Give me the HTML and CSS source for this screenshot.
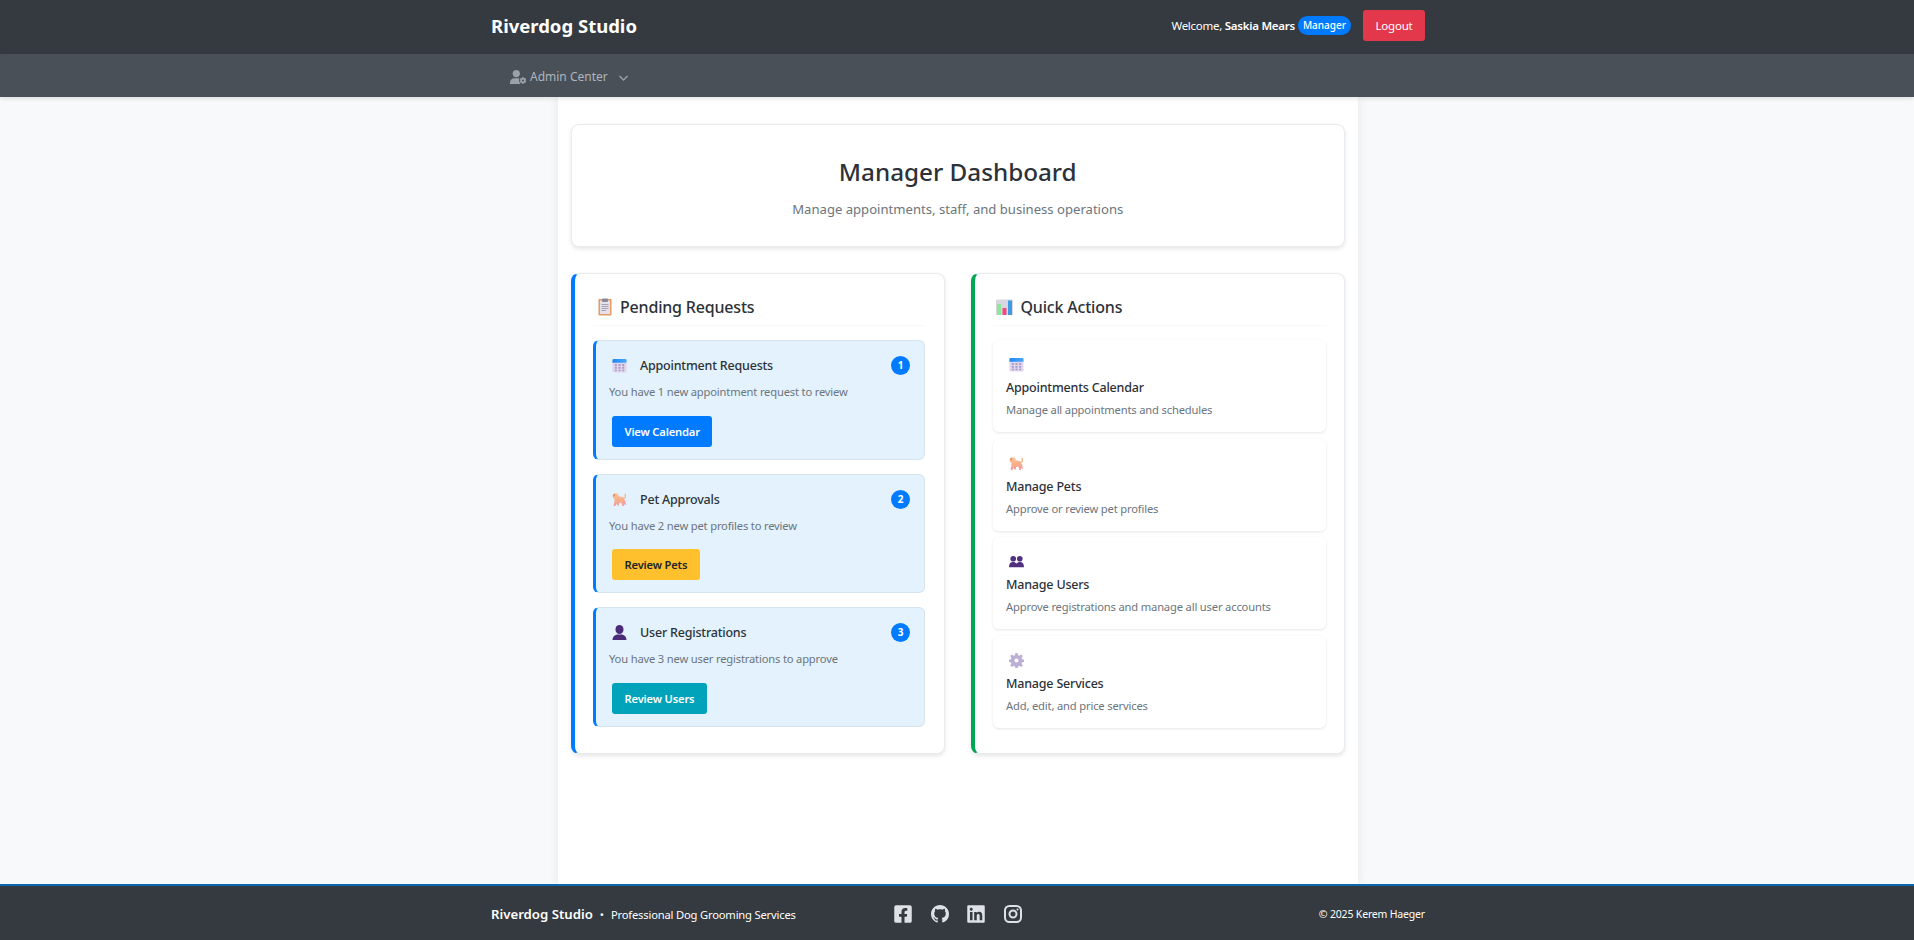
FILE: index.html
```html
<!DOCTYPE html>
<html lang="en">
<head>
    <meta charset="UTF-8">
    <meta name="viewport" content="width=device-width, initial-scale=1.0">
    <title>Riverdog Studio</title>
    <link rel="stylesheet" href="styles.css">
</head>
<body>

    <!-- Shared icon drawings -->
    <svg class="icon-defs" width="0" height="0" aria-hidden="true">
        <defs>
            <linearGradient id="calTop" x1="0" y1="0" x2="1" y2="0">
                <stop offset="0" stop-color="#1e88f5"/>
                <stop offset="1" stop-color="#4aa8f8"/>
            </linearGradient>
            <linearGradient id="dogFur" x1="0" y1="0" x2="0" y2="1">
                <stop offset="0" stop-color="#f9c598"/>
                <stop offset="1" stop-color="#f6a585"/>
            </linearGradient>
            <symbol id="ico-calendar" viewBox="0 0 16 16">
                <rect x="0.5" y="1" width="15" height="14.5" rx="1.5" fill="#e2d6ee"/>
                <path d="M0.5 5V2.500A1.500 1.500 0 0 1 2 1h12a1.500 1.500 0 0 1 1.500 1.500V5z" fill="url(#calTop)"/>
                <g fill="#a99cc4">
                    <rect x="3" y="6.500" width="2.200" height="2"/><rect x="6.900" y="6.500" width="2.200" height="2"/><rect x="10.800" y="6.500" width="2.200" height="2"/>
                    <rect x="3" y="9.500" width="2.200" height="2"/><rect x="6.900" y="9.500" width="2.200" height="2"/><rect x="10.800" y="9.500" width="2.200" height="2"/>
                    <rect x="3" y="12.500" width="2.200" height="1.600"/><rect x="6.900" y="12.500" width="2.200" height="1.600"/><rect x="10.800" y="12.500" width="2.200" height="1.600"/>
                </g>
            </symbol>
            <symbol id="ico-clipboard" viewBox="0 0 14 18">
                <rect x="0.500" y="1" width="13" height="16.500" rx="0.800" fill="#e79a63"/>
                <rect x="2" y="2.500" width="10" height="13.500" fill="#e4e1ea"/>
                <rect x="4" y="0.500" width="6" height="3.500" rx="1" fill="#8d8599"/>
                <path d="M3.500 6.500h7M3.500 8.500h7M3.500 10.500h7M3.500 12.500h4.500" stroke="#a8a3b4" stroke-width="1"/>
            </symbol>
            <symbol id="ico-chart" viewBox="0 0 17 16">
                <rect x="0" y="0.500" width="17" height="15.500" rx="0.800" fill="#d8d6de"/>
                <rect x="1" y="5" width="4" height="11" fill="#8fe59a"/>
                <rect x="6.500" y="9" width="4" height="7" fill="#ef4a82"/>
                <rect x="12" y="1.500" width="4" height="14.500" fill="#3f9be0"/>
            </symbol>
            <symbol id="ico-dog" viewBox="0 0 16 16">
                <path d="M11.800 7.500c2.400-.3 3.500-3.300 1.700-5.500" fill="none" stroke="#f6b48c" stroke-width="1.400"/>
                <path d="M2.600 10.500l-1 4.500h1.800l1.900-3zM5 11l.6 3.500h1.600l.4-3zM10 11l1 4h1.800l-.4-4.500zM11.500 9.500l2 4h1.400l-1-5z" fill="#f59d97"/>
                <path d="M1.700 2.200C3 .9 5.500.9 6.500 2.300c.4.7.6 1.500.6 2.200 1.800.6 3.300.6 4.600.7 1 .3 1.300 1.500 1.200 2.800-.1 1.700-1 3-2.500 3.300-2.400.5-4.900.5-7-.1-.9-.4-1.100-2-.6-3.700C1.600 7 1 6 .7 4.800c-.2-1 .3-2 1-2.600z" fill="url(#dogFur)"/>
                <path d="M1.200 2.800c.6-.9 1.700-1.200 2.300-.8-.1 1.200-.5 2.300-1.200 3-.7-.5-1.300-1.300-1.100-2.200z" fill="#e08f63"/>
            </symbol>
            <symbol id="ico-user" viewBox="0 0 16 16">
                <ellipse cx="8" cy="4.800" rx="4.300" ry="4.800" fill="#4b2a78"/>
                <path d="M0.500 16c.1-3.400 2-5.200 4.800-5.900h5.400c2.800.7 4.700 2.500 4.800 5.900z" fill="#4b2a78"/>
            </symbol>
            <symbol id="ico-users" viewBox="0 0 16 12">
                <circle cx="4.500" cy="3" r="3" fill="#51307f"/>
                <circle cx="11.500" cy="3" r="3" fill="#51307f"/>
                <path d="M0 12c0-3.500 1.500-5.500 4.500-5.500 1.500 0 2.700.6 3.500 1.700.8-1.100 2-1.700 3.500-1.700 3 0 4.500 2 4.500 5.500z" fill="#51307f"/>
            </symbol>
            <symbol id="ico-gear" viewBox="0 0 16 16">
                <path d="M6.800 0h2.400l.4 2.300 1.500.6 1.900-1.300 1.700 1.700-1.300 1.900.6 1.500 2 .4v2.400l-2 .4-.6 1.500 1.300 1.900-1.700 1.700-1.900-1.300-1.500.6-.4 2h-2.400l-.4-2-1.500-.6-1.900 1.300-1.700-1.700 1.300-1.900-.6-1.500-2-.4v-2.400l2-.4.6-1.500-1.300-1.900 1.700-1.700 1.900 1.300 1.500-.6z" fill="#bcaed4"/>
                <circle cx="8" cy="8" r="2.200" fill="#fff"/>
            </symbol>
        </defs>
    </svg>

    <header class="topbar">
        <div class="wrap topbar-inner">
            <a class="brand">Riverdog Studio</a>
            <div class="user-area">
                <span class="welcome">Welcome, <strong>Saskia Mears</strong></span>
                <span class="role-pill">Manager</span>
                <button class="logout" type="button">Logout</button>
            </div>
        </div>
    </header>

    <nav class="subnav">
        <div class="wrap subnav-inner">
            <svg class="nav-icon" viewBox="0 0 16 14" width="16" height="14">
                <circle cx="6.300" cy="3.600" r="3.600" fill="#9aa1a8"/>
                <path d="M0 14v-1.600C0 10 2 8.200 4.300 8.200h3.900c.4 0 .7 0 1 .1-.3 1.900.1 4 1.200 5.700z" fill="#9aa1a8"/>
                <circle cx="13" cy="10.500" r="1.900" fill="none" stroke="#9aa1a8" stroke-width="1.800"/>
                <path d="M13 7v1.200M13 12.800V14M10 8.800l1 .6M15 11.600l1 .6M10 12.200l1-.6M15 9.400l1-.6" stroke="#9aa1a8" stroke-width="1.300"/>
            </svg>
            <span class="nav-label">Admin Center</span>
            <svg class="nav-chevron" viewBox="0 0 9 6" width="9" height="6">
                <path d="M.5 1L4.500 5 8.500 1" fill="none" stroke="#9aa1a8" stroke-width="1.400"/>
            </svg>
        </div>
    </nav>

    <main class="page">
        <section class="hero">
            <h1>Manager Dashboard</h1>
            <p>Manage appointments, staff, and business operations</p>
        </section>

        <div class="columns">
            <section class="panel panel-blue">
                <h2 class="panel-title">
                    <svg class="title-icon clip"><use href="#ico-clipboard"/></svg>
                    Pending Requests
                </h2>

                <article class="request">
                    <div class="request-head">
                        <svg class="emoji"><use href="#ico-calendar"/></svg>
                        <h3>Appointment Requests</h3>
                        <span class="count">1</span>
                    </div>
                    <p>You have 1 new appointment request to review</p>
                    <a class="btn btn-blue">View Calendar</a>
                </article>

                <article class="request">
                    <div class="request-head">
                        <svg class="emoji"><use href="#ico-dog"/></svg>
                        <h3>Pet Approvals</h3>
                        <span class="count">2</span>
                    </div>
                    <p>You have 2 new pet profiles to review</p>
                    <a class="btn btn-yellow">Review Pets</a>
                </article>

                <article class="request">
                    <div class="request-head">
                        <svg class="emoji"><use href="#ico-user"/></svg>
                        <h3>User Registrations</h3>
                        <span class="count">3</span>
                    </div>
                    <p>You have 3 new user registrations to approve</p>
                    <a class="btn btn-teal">Review Users</a>
                </article>
            </section>

            <section class="panel panel-green">
                <h2 class="panel-title">
                    <svg class="title-icon chart"><use href="#ico-chart"/></svg>
                    Quick Actions
                </h2>

                <a class="action">
                    <svg class="emoji"><use href="#ico-calendar"/></svg>
                    <h3>Appointments Calendar</h3>
                    <p>Manage all appointments and schedules</p>
                </a>
                <a class="action">
                    <svg class="emoji"><use href="#ico-dog"/></svg>
                    <h3>Manage Pets</h3>
                    <p>Approve or review pet profiles</p>
                </a>
                <a class="action">
                    <svg class="emoji"><use href="#ico-users"/></svg>
                    <h3>Manage Users</h3>
                    <p>Approve registrations and manage all user accounts</p>
                </a>
                <a class="action">
                    <svg class="emoji"><use href="#ico-gear"/></svg>
                    <h3>Manage Services</h3>
                    <p>Add, edit, and price services</p>
                </a>
            </section>
        </div>
    </main>

    <footer class="footer">
        <div class="wrap footer-inner">
            <div class="footer-brand">
                <strong>Riverdog Studio</strong>
                <span class="dot">&bull;</span>
                <span class="tagline">Professional Dog Grooming Services</span>
            </div>
            <div class="socials">
                <svg viewBox="0 0 448 512"><path d="M400 32H48A48 48 0 0 0 0 80v352a48 48 0 0 0 48 48h137.250V327.690h-63V256h63v-54.640c0-62.150 37-96.480 93.670-96.480 27.140 0 55.520 4.840 55.520 4.840v61h-31.270c-30.810 0-40.420 19.120-40.420 38.730V256h68.780l-11 71.690h-57.780V480H400a48 48 0 0 0 48-48V80a48 48 0 0 0-48-48z"/></svg>
                <svg viewBox="0 0 16 16"><path d="M8 0C3.580 0 0 3.580 0 8c0 3.540 2.290 6.530 5.470 7.590.4.070.55-.17.55-.38 0-.19-.01-.82-.01-1.490-2.010.37-2.530-.49-2.690-.94-.09-.23-.48-.94-.82-1.130-.28-.15-.68-.52-.01-.53.63-.01 1.080.58 1.230.82.720 1.210 1.870.87 2.330.66.070-.52.280-.87.510-1.070-1.780-.2-3.640-.89-3.640-3.950 0-.87.310-1.590.820-2.150-.08-.2-.36-1.020.080-2.120 0 0 .670-.21 2.200.82.640-.18 1.320-.27 2-.27.680 0 1.360.09 2 .27 1.530-1.040 2.200-.82 2.200-.82.440 1.100.160 1.920.080 2.120.510.560.820 1.270.820 2.150 0 3.070-1.870 3.750-3.650 3.950.290.250.540.730.540 1.480 0 1.070-.01 1.930-.01 2.200 0 .21.150.46.550.38A8.012 8.012 0 0 0 16 8c0-4.420-3.580-8-8-8z"/></svg>
                <svg viewBox="0 0 448 512"><path d="M416 32H31.900C14.300 32 0 46.500 0 64.300v383.400C0 465.500 14.300 480 31.900 480H416c17.600 0 32-14.500 32-32.300V64.300c0-17.800-14.400-32.300-32-32.300zM135.400 416H69V202.200h66.500V416zm-33.200-243c-21.300 0-38.500-17.300-38.500-38.500S80.900 96 102.200 96c21.200 0 38.500 17.300 38.500 38.500 0 21.300-17.200 38.500-38.500 38.500zm282.100 243h-66.400V312c0-24.800-.5-56.700-34.500-56.700-34.600 0-39.900 27-39.900 54.900V416h-66.400V202.200h63.700v29.200h.9c8.900-16.800 30.600-34.500 62.900-34.500 67.200 0 79.700 44.300 79.700 101.900V416z"/></svg>
                <svg viewBox="0 0 18 20" class="insta">
                    <rect x="1" y="2" width="16" height="16" rx="4.500"/>
                    <circle cx="9" cy="10" r="3.500"/>
                    <circle class="insta-dot" cx="13.500" cy="5.500" r="1"/>
                </svg>
            </div>
            <div class="copyright">&copy; 2025 Kerem Haeger</div>
        </div>
    </footer>

</body>
</html>
```

FILE: styles.css
```css
* {
    box-sizing: border-box;
}

body {
    display: flex;
    flex-direction: column;
    height: 100vh;
    margin: 0;
    font-family: "Noto Sans", "Open Sans", sans-serif;
    background-color: #f8f9fa;
    color: #212529;
    overflow: hidden;
}

.icon-defs {
    position: absolute;
}

.wrap {
    width: 964px;
    margin: 0 474px 0 476px;
    padding: 0 15px;
}

/* Top bar */
.topbar {
    height: 54px;
    flex-shrink: 0;
    background-color: #343a40;
}

.topbar-inner {
    display: flex;
    align-items: center;
    justify-content: space-between;
    height: 100%;
    padding-bottom: 3px;
}

.brand {
    color: #fff;
    font-size: 18.500px;
    font-weight: 700;
}

.user-area {
    display: flex;
    align-items: center;
    color: #fff;
    font-size: 11.500px;
}

.welcome {
    letter-spacing: -0.260px;
}

.welcome strong {
    font-weight: 600;
}

.role-pill {
    margin-left: 3px;
    padding: 3px 5px;
    height: 19px;
    border-radius: 10px;
    background-color: #007bff;
    font-size: 10px;
    line-height: 13px;
    font-weight: 500;
}

.logout {
    width: 62px;
    height: 31px;
    margin-left: 12px;
    padding: 0;
    border: none;
    border-radius: 3px;
    background-color: #e3384c;
    color: #fff;
    font-family: inherit;
    font-size: 11.500px;
    letter-spacing: -0.200px;
}

/* Sub navigation */
.subnav {
    height: 43px;
    flex-shrink: 0;
    background-color: #495057;
    position: relative;
    box-shadow: 0 2px 4px rgba(0, 0, 0, 0.1);
    z-index: 2;
}

.subnav-inner {
    display: flex;
    align-items: center;
    height: 100%;
    padding-top: 2px;
    color: #adb5bd;
    font-size: 12px;
}

.nav-icon {
    margin-left: 19px;
}

.nav-label {
    margin-left: 4px;
}

.nav-chevron {
    margin-left: 11px;
    margin-top: 2px;
}

/* Main column */
.page {
    flex: 1;
    width: 800px;
    margin: 0 556px 0 558px;
    padding: 27px 13.500px 0 13px;
    background-color: #fff;
    box-shadow: 0 0 10px rgba(0, 0, 0, 0.08);
}

.hero {
    height: 123px;
    padding-top: 30px;
    border: 1px solid #e9ecef;
    border-radius: 8px;
    background-color: #fff;
    box-shadow: 0 2px 4px rgba(0, 0, 0, 0.1);
    text-align: center;
}

.hero h1 {
    margin: 0;
    color: #2c3238;
    font-size: 24.250px;
    line-height: 34px;
    font-weight: 500;
}

.hero p {
    margin: 11px 0 0;
    color: #6c757d;
    font-size: 13.100px;
}

.columns {
    display: grid;
    grid-template-columns: 374px 373.500px;
    justify-content: space-between;
    align-items: start;
    margin-top: 26px;
}

.panel {
    height: 481px;
    padding: 0 19px 0 18px;
    border: 1px solid #e9ecef;
    border-left-width: 4px;
    border-radius: 8px;
    background-color: #fff;
    box-shadow: 0 2px 4px rgba(0, 0, 0, 0.1);
}

.panel-blue {
    border-left-color: #007bff;
}

.panel-green {
    border-left-color: #00a651;
    padding-right: 18px;
}

.panel-title {
    display: flex;
    align-items: center;
    height: 52px;
    margin: 0 0 14px;
    padding: 15px 0 0 5px;
    border-bottom: 1px solid #f8f9fa;
    color: #2c3238;
    font-size: 16px;
    font-weight: 500;
    letter-spacing: -0.190px;
}

.title-icon {
    flex-shrink: 0;
    margin-right: 8px;
}

.title-icon.clip {
    width: 14px;
    height: 18px;
}

.title-icon.chart {
    width: 17px;
    height: 16px;
    margin-left: -2px;
    margin-right: 7.500px;
}

/* Pending request cards */
.request {
    height: 119.500px;
    margin-bottom: 14px;
    padding: 15px 14px 0 13px;
    border: 1px solid #d6e4f0;
    border-left: 3px solid #007bff;
    border-radius: 6px;
    background-color: #e3f2fd;
}

.request-head {
    display: flex;
    align-items: center;
    height: 19px;
    padding-left: 3px;
}

.request-head .emoji {
    width: 15px;
    height: 15px;
    margin-right: 13px;
}

.request-head h3 {
    flex: 1;
    margin: 0;
    color: #2c3238;
    font-size: 12.500px;
    font-weight: 500;
    letter-spacing: -0.200px;
}

.count {
    width: 19px;
    height: 19px;
    border-radius: 50%;
    background-color: #007bff;
    color: #fff;
    font-size: 10px;
    font-weight: 700;
    line-height: 19px;
    text-align: center;
}

.request p {
    margin: 9px 0 0;
    color: #6c757d;
    font-size: 11.200px;
    letter-spacing: -0.180px;
}

.btn {
    display: inline-block;
    height: 31px;
    margin: 16.500px 0 0 3px;
    padding: 0 12.500px;
    border-radius: 3px;
    font-size: 11.200px;
    font-weight: 600;
    letter-spacing: -0.180px;
    line-height: 31px;
}

.btn-blue {
    background-color: #007bff;
    color: #fff;
}

.btn-yellow {
    background-color: #ffc02e;
    color: #212529;
}

.btn-teal {
    background-color: #00a3b9;
    color: #fff;
}

/* Quick action cards */
.action {
    display: block;
    height: 92px;
    margin-bottom: 6.500px;
    padding: 17px 13px 0;
    border-radius: 6px;
    background-color: #fff;
    box-shadow: 0 1px 3px rgba(0, 0, 0, 0.1);
}

.action .emoji {
    display: block;
    width: 15px;
    height: 15px;
    margin-left: 3px;
}

.action h3 {
    margin: 7px 0 0;
    color: #2c3238;
    font-size: 12.500px;
    font-weight: 500;
    letter-spacing: -0.200px;
}

.action p {
    margin: 6px 0 0;
    color: #6c757d;
    font-size: 11.200px;
    letter-spacing: -0.170px;
}

/* Footer */
.footer {
    height: 56px;
    flex-shrink: 0;
    border-top: 2px solid #0a6ab0;
    background-color: #343a40;
    color: #fff;
    position: relative;
    z-index: 2;
}

.footer-inner {
    display: flex;
    align-items: center;
    height: 100%;
    padding-top: 1px;
    font-size: 11.200px;
}

.footer-brand {
    width: 403px;
}

.footer-brand strong {
    font-size: 13.200px;
    font-weight: 600;
}

.tagline {
    letter-spacing: -0.180px;
}

.dot {
    margin: 0 4px;
}

.socials {
    display: flex;
    gap: 18.500px;
}

.socials svg {
    width: 18px;
    height: 20px;
    fill: #dee2e6;
}

.socials .insta {
    fill: none;
    stroke: #dee2e6;
    stroke-width: 2;
}

.socials .insta-dot {
    fill: #dee2e6;
    stroke: none;
}

.copyright {
    margin-left: auto;
    font-size: 10.500px;
    letter-spacing: -0.180px;
}
```
